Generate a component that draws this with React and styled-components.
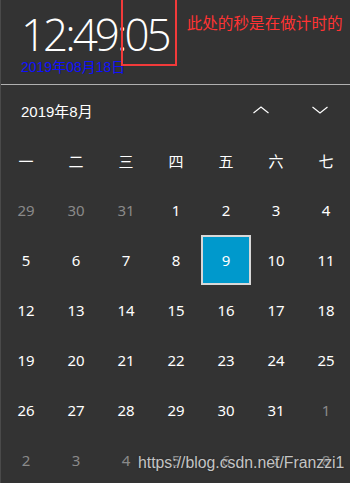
import React from "react";
import styled, { createGlobalStyle } from "styled-components";

const GlobalStyle = createGlobalStyle`
  body {
    margin: 0;
    background: #fff;
  }
`;

const weekdays = ["一", "二", "三", "四", "五", "六", "七"];

// month offset: -1 = previous month, 0 = current, 1 = next
const days = [
  [29, -1], [30, -1], [31, -1], [1, 0], [2, 0], [3, 0], [4, 0],
  ...Array.from({ length: 31 - 4 }, (_, i) => [i + 5, 0]),
  [1, 1], [2, 1], [3, 1], [4, 1], [5, 1], [6, 1], [7, 1], [8, 1],
];

const App = () => {
  return (
    <>
      <GlobalStyle />
      <Panel>
        <ClockArea>
          <TimeRow>
            <Time>
              12:49:<Seconds>05</Seconds>
            </Time>
            <Note>此处的秒是在做计时的</Note>
          </TimeRow>
          <DateText>2019年08月18日</DateText>
        </ClockArea>

        <MonthBar>
          <MonthTitle>2019年8月</MonthTitle>
          <NavButton aria-label="previous">
            <svg width="16" height="8" viewBox="0 0 16 8">
              <polyline points="0.5,7 8,1 15.5,7" fill="none" stroke="#fff" strokeWidth="1.2" />
            </svg>
          </NavButton>
          <NavButton aria-label="next">
            <svg width="16" height="8" viewBox="0 0 16 8">
              <polyline points="0.5,1 8,7 15.5,1" fill="none" stroke="#fff" strokeWidth="1.2" />
            </svg>
          </NavButton>
        </MonthBar>

        <Grid>
          {weekdays.map((w) => (
            <Weekday key={w}>{w}</Weekday>
          ))}
          {days.map(([d, m], i) => (
            <Day key={i} $muted={m !== 0} $selected={m === 0 && d === 9}>
              {d}
            </Day>
          ))}
        </Grid>

        <Watermark>https://blog.csdn.net/Franzzi1</Watermark>
      </Panel>
    </>
  );
};

const Panel = styled.div`
  position: relative;
  width: 349px;
  height: 483px;
  background: #333333;
  border-left: 1px solid #4a4a4a;
  overflow: hidden;
  font-family: "Noto Sans", "Noto Sans CJK SC", sans-serif;
  color: #fff;
`;

const ClockArea = styled.div`
  height: 85px;
  box-sizing: border-box;
  padding: 9px 0 0 20px;
  border-bottom: 1px solid #b0b0b0;
`;

const TimeRow = styled.div`
  display: flex;
  align-items: flex-start;
`;

const Time = styled.div`
  font-family: "Open Sans", "Noto Sans", sans-serif;
  font-weight: 300;
  font-size: 44px;
  line-height: 50px;
  letter-spacing: -3px;
`;

const Seconds = styled.span`
  position: relative;

  &::after {
    content: "";
    position: absolute;
    left: -3px;
    right: -8px;
    top: -7px;
    bottom: -2px;
    border: 2px solid #f23a3a;
  }
`;

const Note = styled.div`
  margin: 2px 0 0 18px;
  font-family: "Noto Sans CJK SC", sans-serif;
  font-size: 15.6px;
  line-height: 22px;
  color: #ff3333;
  white-space: nowrap;
`;

const DateText = styled.div`
  font-family: "Liberation Sans", "Noto Sans CJK SC", sans-serif;
  font-size: 14px;
  line-height: 16px;
  color: #1010ff;
`;

const MonthBar = styled.div`
  display: flex;
  align-items: center;
  height: 50px;
  padding: 0 22px 0 20px;
`;

const MonthTitle = styled.div`
  flex: 1;
  font-family: "Liberation Sans", "Noto Sans CJK SC", sans-serif;
  font-size: 15px;
`;

const NavButton = styled.button`
  display: flex;
  align-items: center;
  justify-content: center;
  width: 16px;
  height: 16px;
  padding: 0;
  margin-left: 43px;
  border: none;
  background: none;
`;

const Grid = styled.div`
  display: grid;
  grid-template-columns: repeat(7, 50px);
  grid-auto-rows: 50px;
`;

const Weekday = styled.div`
  display: flex;
  align-items: center;
  justify-content: center;
  font-family: "Noto Sans CJK SC", sans-serif;
  font-size: 15px;
`;

const Day = styled.div`
  display: flex;
  align-items: center;
  justify-content: center;
  box-sizing: border-box;
  font-family: "Noto Sans", sans-serif;
  font-size: 15px;
  color: ${(p) => (p.$muted ? "#8a8a8a" : "#fff")};
  background: ${(p) => (p.$selected ? "#0099cc" : "transparent")};
  border: 2px solid ${(p) => (p.$selected ? "#d8d8d8" : "transparent")};
`;

const Watermark = styled.div`
  position: absolute;
  left: 137px;
  top: 454px;
  font-family: "Liberation Sans", sans-serif;
  font-size: 15.8px;
  color: #c4c4c4;
  text-shadow: 0 0 2px #222;
`;

export default App;
